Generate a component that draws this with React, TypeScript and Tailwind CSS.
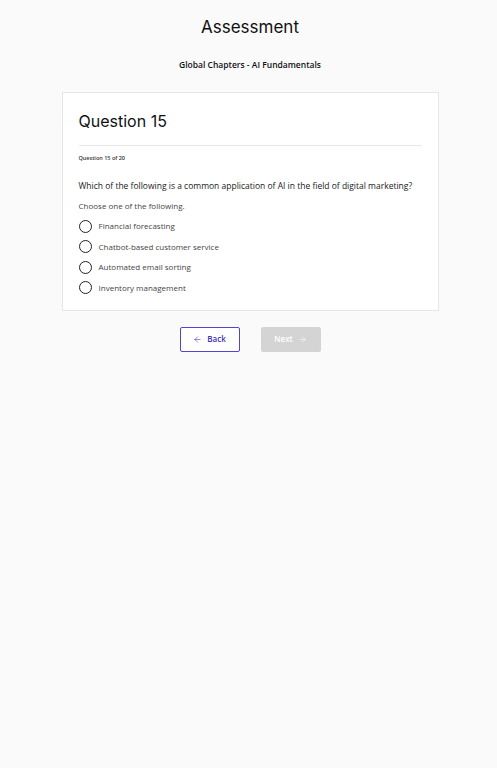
import { ArrowLeft, ArrowRight } from "lucide-react"

const options = [
  "Financial forecasting",
  "Chatbot-based customer service",
  "Automated email sorting",
  "Inventory management",
]

export default function App() {
  return (
    <div className="min-h-screen w-full bg-[#fafafa] font-['Open_Sans',sans-serif] text-[#222]">
      <div className="flex flex-col items-center pl-[3px] pt-[15px]">
        <h1 className="font-['Inter',sans-serif] text-[17px] leading-[24px] text-[#111]">Assessment</h1>
        <h2 className="mt-[20px] text-[8.5px] font-semibold leading-[12px] text-[#111]">
          Global Chapters - AI Fundamentals
        </h2>

        <div className="mt-[21px] w-[377px] border border-[#e6e6e6] bg-white px-[16px] pb-[16px] pt-[16px]">
          <div className="font-['Inter',sans-serif] text-[16px] leading-[24px] text-[#111]">Question 15</div>
          <div className="mt-[12px] h-px bg-[#e8e8e8]" />
          <div className="mt-[8px] text-[5.5px] font-semibold leading-[8px] text-[#333]">Question 15 of 20</div>
          <p className="mt-[18px] text-[8.5px] font-medium leading-[12px] text-[#1a1a1a]">
            Which of the following is a common application of AI in the field of digital marketing?
          </p>
          <p className="mt-[8px] text-[8px] leading-[12px] text-[#444]">Choose one of the following.</p>
          <div className="mt-[8px] flex flex-col gap-[8.5px]">
            {options.map((o) => (
              <label key={o} className="flex h-[12px] items-center gap-[7px]">
                <span className="h-[13px] w-[13px] rounded-full border-[1.5px] border-[#222] bg-white" />
                <span className="text-[8px] leading-[12px] text-[#444]">{o}</span>
              </label>
            ))}
          </div>
        </div>

        <div className="mt-[16px] flex gap-[21px]">
          <button className="flex h-[25px] w-[60px] items-center justify-center gap-[5px] rounded-[2px] border-[1.5px] border-[#5046d6] bg-white text-[8px] font-semibold text-[#3b34b8]">
            <ArrowLeft size={9} strokeWidth={1.5} />
            Back
          </button>
          <button className="flex h-[25px] w-[60px] items-center justify-center gap-[5px] rounded-[2px] bg-[#d4d4d4] text-[8px] font-semibold text-white">
            Next
            <ArrowRight size={9} strokeWidth={1.5} />
          </button>
        </div>
      </div>
    </div>
  )
}
